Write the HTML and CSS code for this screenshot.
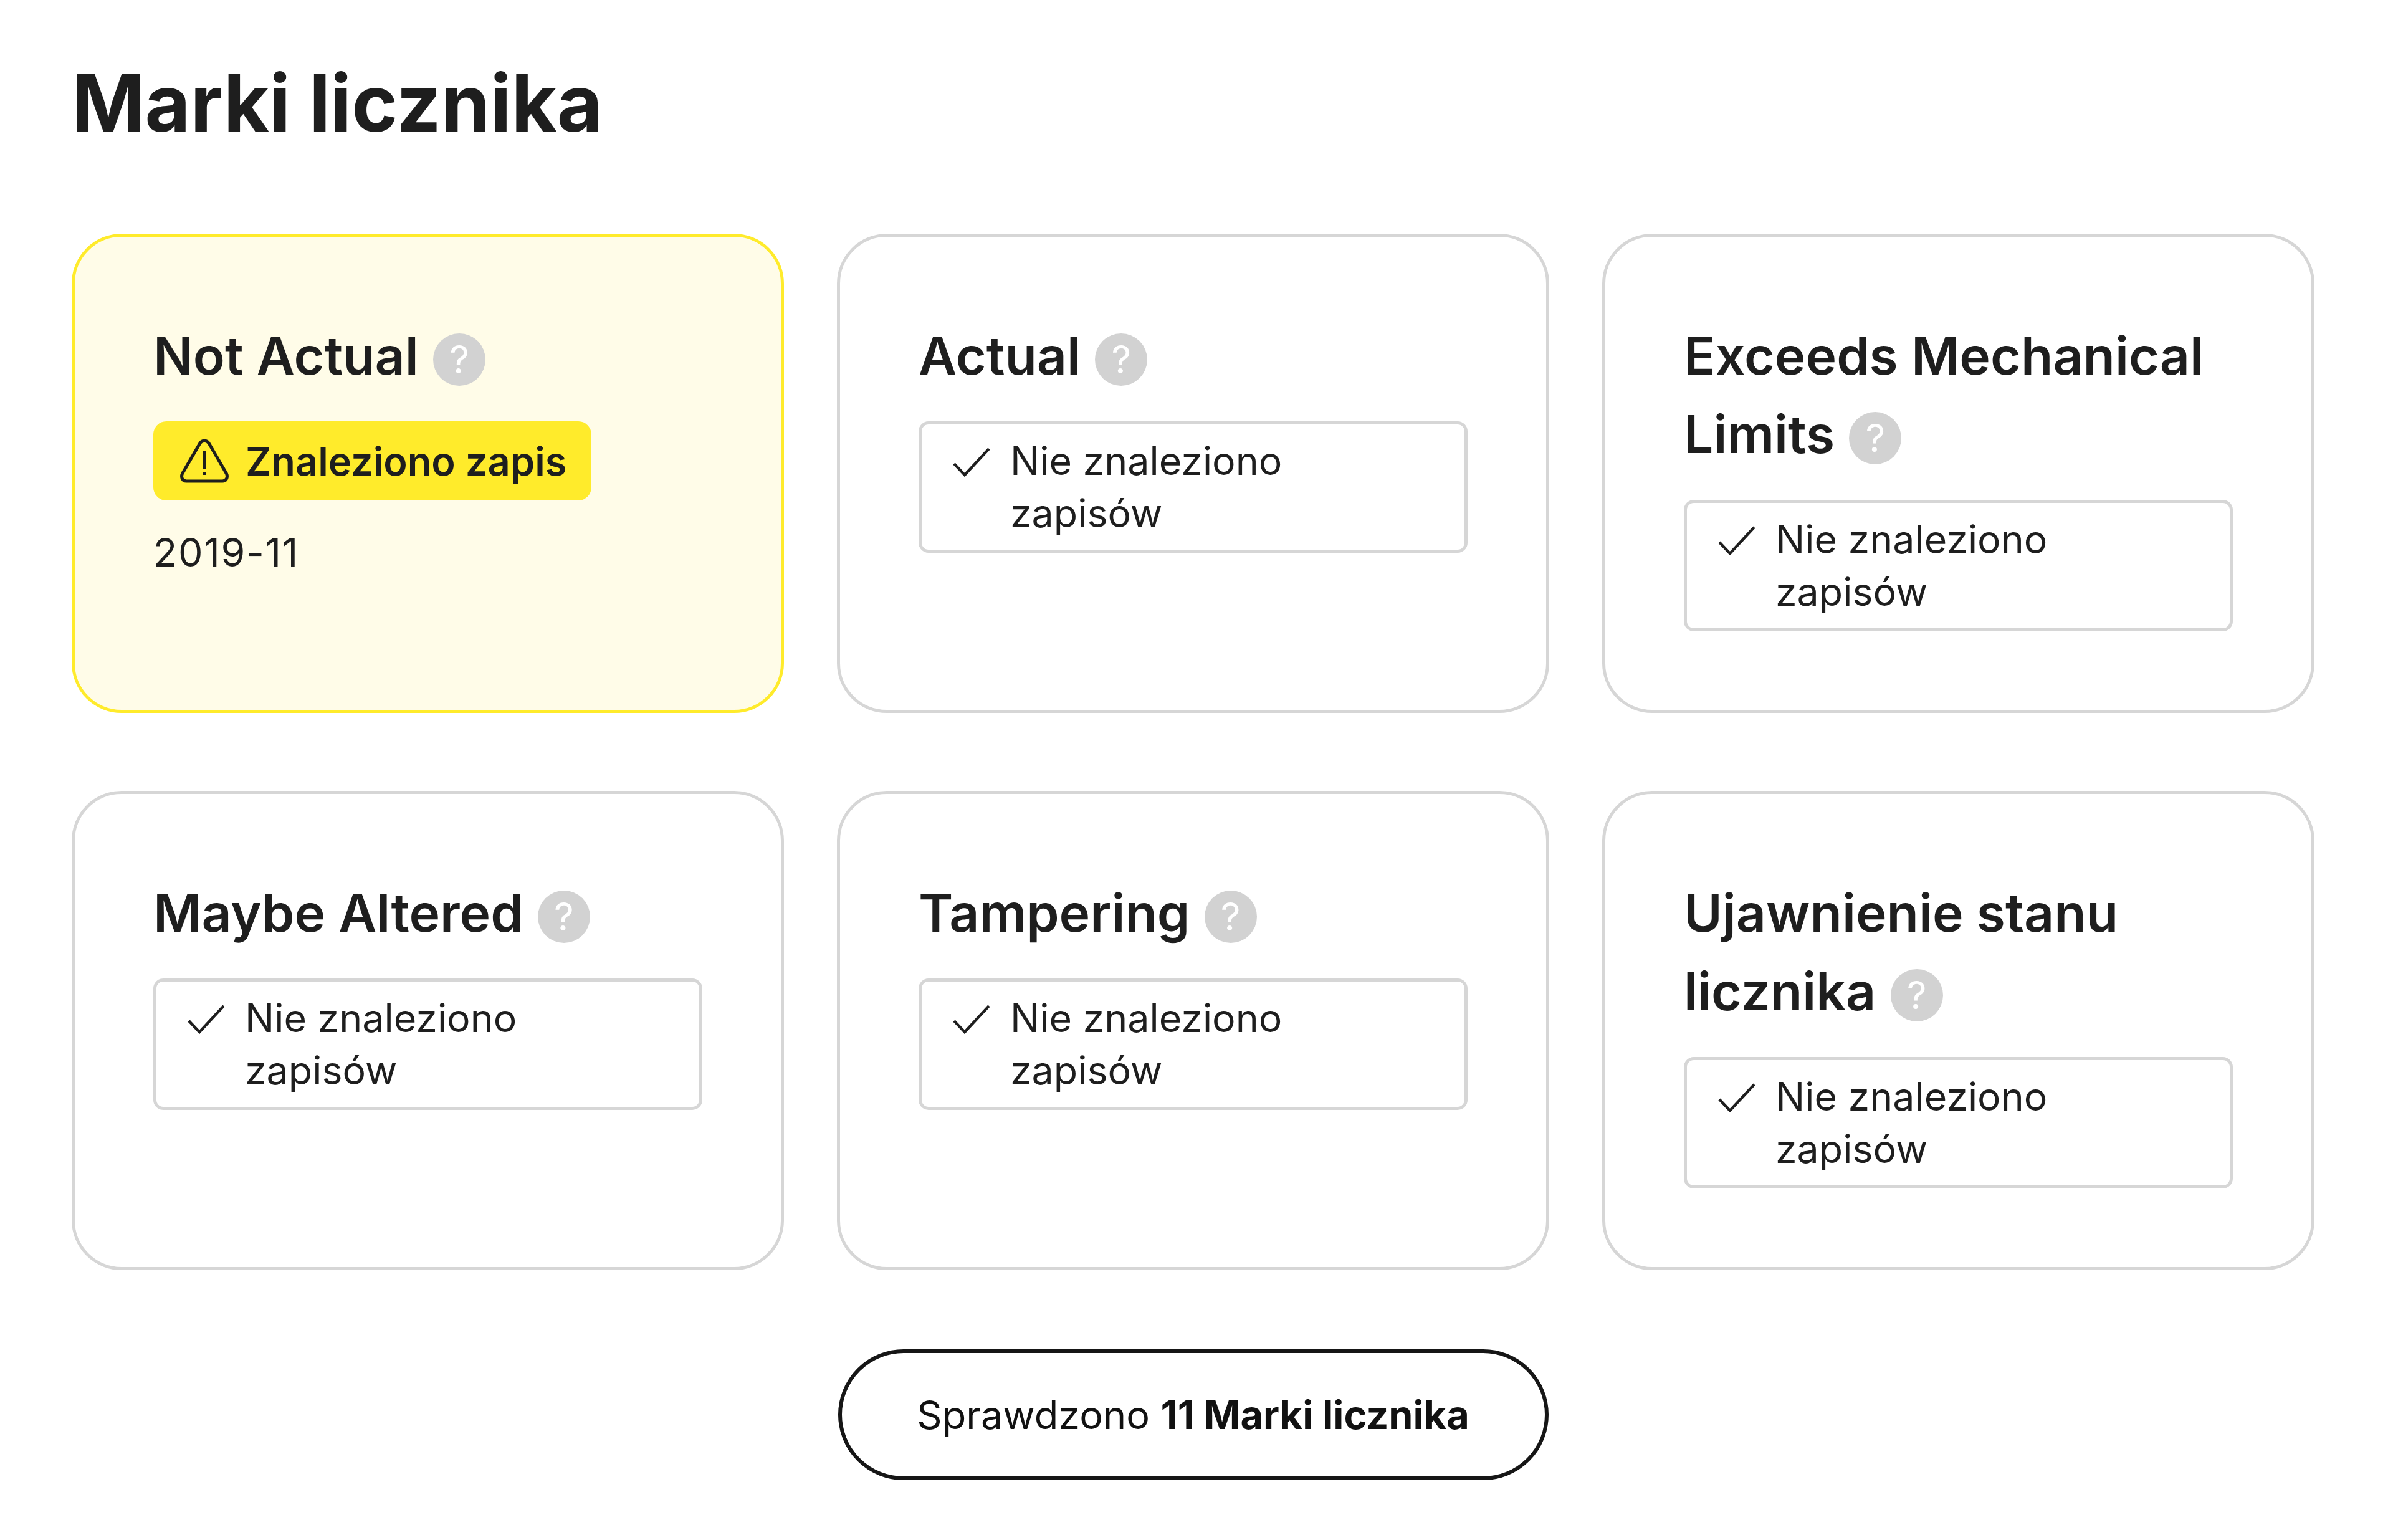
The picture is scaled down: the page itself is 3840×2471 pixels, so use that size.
FILE: index.html
```html
<!DOCTYPE html>
<html lang="en">
<head>
    <meta charset="UTF-8">
    <meta name="viewport" content="width=device-width, initial-scale=1.0">
    <title>Marki licznika</title>
    <link rel="stylesheet" href="styles.css">
</head>
<body>
    <main class="page">
        <h1 class="page-title">Marki licznika</h1>

        <div class="card-grid">
            <section class="card card-alert">
                <h2 class="card-title">Not Actual <span class="help">?</span></h2>
                <div class="badge-found">
                    <svg class="icon-warning" viewBox="0 0 80 72" fill="none" stroke="currentColor" stroke-width="5" stroke-linejoin="round">
                        <path d="M33 7C36 2 44 2 47 7L75.500 56C78 62 75 68 69 68H11C5 68 2 62 4.500 56Z"/>
                        <path d="M40 20V48"/>
                        <path d="M40 54V58"/>
                    </svg>
                    <span>Znaleziono zapis</span>
                </div>
                <p class="record-date">2019-11</p>
            </section>

            <section class="card">
                <h2 class="card-title">Actual <span class="help">?</span></h2>
                <div class="status-clear">
                    <svg class="icon-check" viewBox="0 0 60 48" fill="none" stroke="currentColor" stroke-width="4.500"><path d="M2 27 19 45 58 3"/></svg>
                    <span>Nie znaleziono zapisów</span>
                </div>
            </section>

            <section class="card">
                <h2 class="card-title">Exceeds Mechanical Limits <span class="help">?</span></h2>
                <div class="status-clear">
                    <svg class="icon-check" viewBox="0 0 60 48" fill="none" stroke="currentColor" stroke-width="4.500"><path d="M2 27 19 45 58 3"/></svg>
                    <span>Nie znaleziono zapisów</span>
                </div>
            </section>

            <section class="card">
                <h2 class="card-title">Maybe Altered <span class="help">?</span></h2>
                <div class="status-clear">
                    <svg class="icon-check" viewBox="0 0 60 48" fill="none" stroke="currentColor" stroke-width="4.500"><path d="M2 27 19 45 58 3"/></svg>
                    <span>Nie znaleziono zapisów</span>
                </div>
            </section>

            <section class="card">
                <h2 class="card-title">Tampering <span class="help">?</span></h2>
                <div class="status-clear">
                    <svg class="icon-check" viewBox="0 0 60 48" fill="none" stroke="currentColor" stroke-width="4.500"><path d="M2 27 19 45 58 3"/></svg>
                    <span>Nie znaleziono zapisów</span>
                </div>
            </section>

            <section class="card">
                <h2 class="card-title">Ujawnienie stanu licznika <span class="help">?</span></h2>
                <div class="status-clear">
                    <svg class="icon-check" viewBox="0 0 60 48" fill="none" stroke="currentColor" stroke-width="4.500"><path d="M2 27 19 45 58 3"/></svg>
                    <span>Nie znaleziono zapisów</span>
                </div>
            </section>
        </div>

        <div class="summary">
            <div class="summary-pill">Sprawdzono <strong>11 Marki licznika</strong></div>
        </div>
    </main>
</body>
</html>
```

FILE: styles.css
```css
* {
    margin: 0;
    padding: 0;
    box-sizing: border-box;
}

body {
    font-family: Inter, "Liberation Sans", sans-serif;
    background: #fff;
    color: #1e1e1e;
}

.page {
    padding: 80px 126px 0 115px;
}

.page-title {
    font-size: 126px;
    font-weight: 700;
    line-height: 170px;
    margin-bottom: 125px;
}

.card-grid {
    display: grid;
    grid-template-columns: repeat(3, 1fr);
    grid-auto-rows: 769px;
    column-gap: 85px;
    row-gap: 125px;
}

.card {
    border: 5px solid #d6d6d6;
    border-radius: 80px;
    padding: 128px 125px 0 126px;
}

.card-alert {
    background: #fffce8;
    border-color: #ffeb2b;
}

.card-title {
    font-size: 84px;
    font-weight: 600;
    line-height: 126px;
    margin-bottom: 42px;
}

.help {
    display: inline-block;
    width: 84px;
    height: 84px;
    margin-left: 2px;
    border-radius: 50%;
    background: #d2d2d2;
    color: #fff;
    font-size: 62px;
    font-weight: 400;
    line-height: 84px;
    text-align: center;
    vertical-align: 2px;
}

.badge-found {
    display: inline-flex;
    align-items: center;
    gap: 26px;
    height: 127px;
    padding: 0 40px 0 42px;
    background: #ffeb2b;
    border-radius: 21px;
    font-size: 63.2px;
    font-weight: 600;
}

.icon-warning {
    width: 80px;
    height: 72px;
    flex: none;
}

.record-date {
    font-size: 62.7px;
    letter-spacing: 1.7px;
    line-height: 85px;
    margin-top: 41px;
}

.status-clear {
    display: flex;
    align-items: flex-start;
    width: 881px;
    padding: 16px 40px 17px 50px;
    border: 5px solid #d6d6d6;
    border-radius: 16px;
    font-size: 62.7px;
    line-height: 84px;
}

.icon-check {
    width: 60px;
    height: 48px;
    flex: none;
    margin: 20px 32px 0 0;
}

.summary {
    display: flex;
    justify-content: center;
    margin-top: 127px;
}

.summary-pill {
    display: flex;
    align-items: center;
    justify-content: center;
    gap: 0.28em;
    width: 1140px;
    height: 210px;
    border: 6px solid #161616;
    border-radius: 105px;
    color: #111;
    font-size: 63px;
}

.summary-pill strong {
    font-weight: 700;
}
```
